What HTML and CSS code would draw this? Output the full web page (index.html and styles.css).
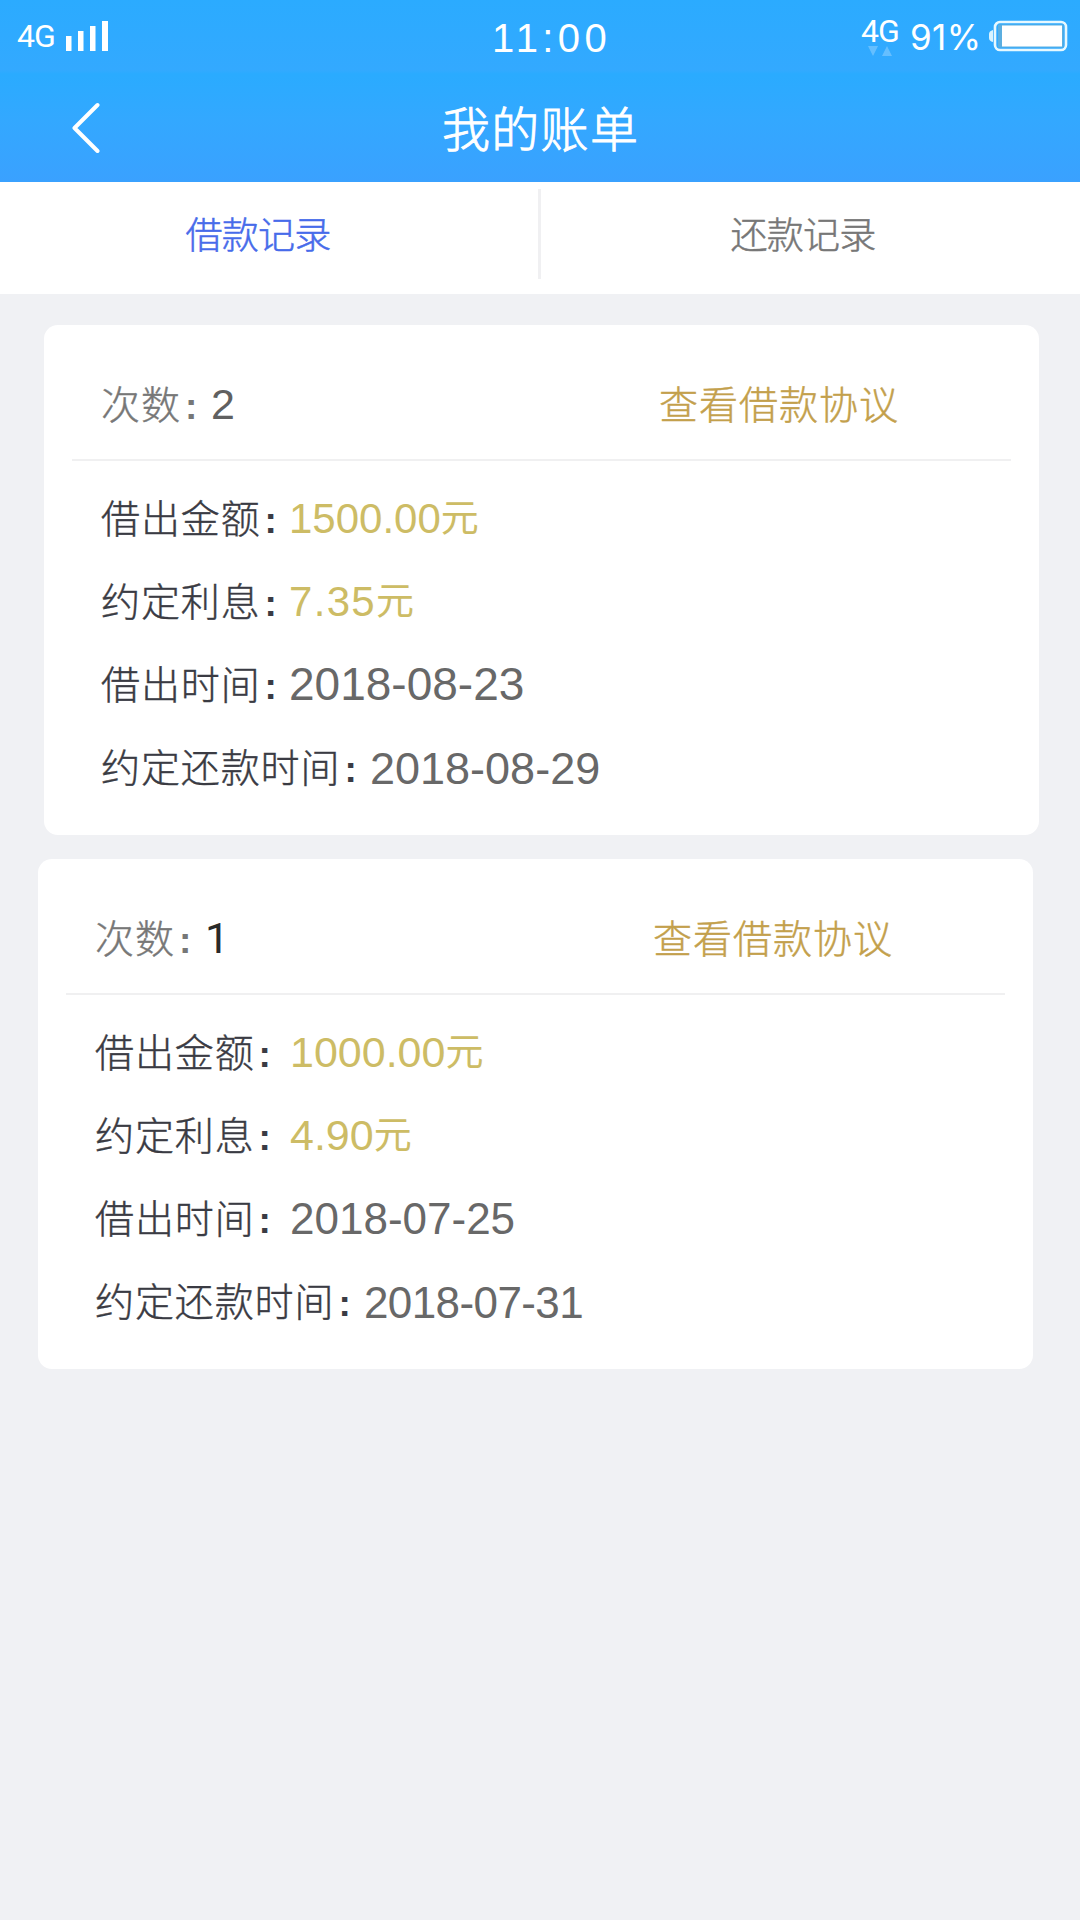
FILE: index.html
```html
<!DOCTYPE html>
<html lang="zh-CN">
<head>
    <meta charset="UTF-8">
    <meta name="viewport" content="width=device-width, initial-scale=1.0">
    <title>我的账单</title>
    <link rel="stylesheet" href="styles.css">
</head>
<body>
<header class="header">
    <div class="status-bar">
        <div class="status-left">
            <span class="network">4G</span>
            <svg class="signal" width="42" height="30" viewBox="0 0 42 30" fill="#fff">
                <rect x="0" y="15" width="5.5" height="15"/>
                <rect x="12" y="10" width="5.5" height="20"/>
                <rect x="24" y="5" width="5.5" height="25"/>
                <rect x="36" y="0" width="6" height="30"/>
            </svg>
        </div>
        <span class="time">11:00</span>
        <div class="status-right">
            <div class="data">
                <span class="network">4G</span>
                <svg class="arrows" width="24" height="10" viewBox="0 0 24 10" fill="#fff">
                    <path d="M0 0h10L5 10zM14 10h10L19 0z"/>
                </svg>
            </div>
            <span class="percent">91%</span>
            <svg class="battery" width="79" height="32" viewBox="0 0 79 32">
                <path d="M4 10v12q-4-1-4-4v-4q0-3 4-4z" fill="#d8f3ff"/>
                <rect x="6" y="2" width="71" height="28" rx="5" fill="none" stroke="#e6f8ff" stroke-width="2.6"/>
                <rect x="9" y="4.5" width="65.5" height="23" fill="#5baee0"/>
                <rect x="13" y="5.5" width="60" height="21" fill="#fff"/>
            </svg>
        </div>
    </div>
    <div class="nav-bar">
        <a href="#" class="back">
            <svg width="28" height="52" viewBox="0 0 28 52" fill="none" stroke="#fff" stroke-width="4" stroke-linecap="round" stroke-linejoin="round">
                <path d="M25.5 3L2.5 26L25.5 49"/>
            </svg>
        </a>
        <h1 class="title">我的账单</h1>
    </div>
</header>

<nav class="tabs">
    <a href="#" class="tab active">借款记录</a>
    <span class="tab-line"></span>
    <a href="#" class="tab">还款记录</a>
</nav>

<main class="list">
    <section class="card">
        <div class="card-head">
            <span class="count-label">次数<b class="colon">:</b></span>
            <span class="count">2</span>
            <a href="#" class="agreement">查看借款协议</a>
        </div>
        <div class="row">
            <span class="label">借出金额<b class="colon">:</b></span>
            <span class="money">1500.00<span class="yuan">元</span></span>
        </div>
        <div class="row">
            <span class="label">约定利息<b class="colon">:</b></span>
            <span class="money rate">7.35<span class="yuan">元</span></span>
        </div>
        <div class="row">
            <span class="label">借出时间<b class="colon">:</b></span>
            <span class="date">2018-08-23</span>
        </div>
        <div class="row">
            <span class="label label-long">约定还款时间<b class="colon">:</b></span>
            <span class="date date-due">2018-08-29</span>
        </div>
    </section>

    <section class="card card-shift">
        <div class="card-head">
            <span class="count-label">次数<b class="colon">:</b></span>
            <span class="count count-dark">1</span>
            <a href="#" class="agreement">查看借款协议</a>
        </div>
        <div class="row">
            <span class="label">借出金额<b class="colon">:</b></span>
            <span class="money">1000.00<span class="yuan">元</span></span>
        </div>
        <div class="row">
            <span class="label">约定利息<b class="colon">:</b></span>
            <span class="money">4.90<span class="yuan">元</span></span>
        </div>
        <div class="row">
            <span class="label">借出时间<b class="colon">:</b></span>
            <span class="date">2018-07-25</span>
        </div>
        <div class="row">
            <span class="label label-long">约定还款时间<b class="colon">:</b></span>
            <span class="date date-due">2018-07-31</span>
        </div>
    </section>
</main>
</body>
</html>
```
FILE: styles.css
```css
* {
    box-sizing: border-box;
}

body {
    margin: 0;
    min-height: 1920px;
    background-color: #f0f1f4;
    font-family: "Liberation Sans", "Noto Sans CJK SC", sans-serif;
    font-weight: 300;
}

a {
    color: inherit;
    text-decoration: none;
}

/* header */
.header {
    height: 182px;
    color: #fff;
    background: linear-gradient(#2babff 0, #33a9ff 70px, #2aabff 74px, #33a8ff 120px, #3aa1ff 182px);
}

.status-bar {
    display: grid;
    grid-template-columns: 492px 1fr auto;
    height: 74px;
    padding-right: 12px;
}

.status-left {
    display: flex;
    padding: 21px 0 0 17px;
    gap: 9px;
}

.network {
    width: 40px;
    font-family: Roboto, sans-serif;
    font-size: 32px;
    font-weight: 400;
    line-height: 30px;
    letter-spacing: -1px;
}

.time {
    padding-top: 16px;
    font-size: 40px;
    line-height: 44px;
    letter-spacing: 4.4px;
}

.status-right {
    display: flex;
}

.data {
    display: flex;
    flex-direction: column;
    width: 49px;
    padding-top: 16px;
}

.arrows {
    margin-left: 7px;
    opacity: 0.25;
}

.percent {
    width: 79px;
    padding-top: 16px;
    font-family: Inter, sans-serif;
    font-size: 35px;
    font-weight: 400;
    line-height: 42px;
    letter-spacing: 0.4px;
}

.battery {
    margin-top: 20px;
}

.nav-bar {
    display: flex;
    align-items: center;
    height: 108px;
    padding-left: 72px;
}

.back {
    display: flex;
    width: 370px;
}

.title {
    margin: -5px 0 0;
    font-size: 48px;
    font-weight: 300;
    letter-spacing: 1.3px;
    -webkit-text-stroke: 0.9px;
}

/* tabs */
.tabs {
    display: grid;
    grid-template-columns: 538px 3px 1fr;
    height: 112px;
    background-color: #fff;
}

.tab {
    padding-right: 22px;
    color: #777;
    font-size: 37px;
    line-height: 110px;
    letter-spacing: -0.8px;
    text-align: center;
    -webkit-text-stroke: 0.5px;
}

.tab:last-child {
    padding-right: 15px;
}

.tab.active {
    color: #476bea;
}

.tab-line {
    height: 90px;
    margin-top: 7px;
    background-color: #f0f0f2;
}

/* cards */
.list {
    padding: 31px 0 0 44px;
}

.card {
    width: 995px;
    height: 510px;
    margin-bottom: 24px;
    padding: 0 28px;
    border-radius: 14px;
    background-color: #fff;
}

.card-shift {
    margin-left: -6px;
}

.card-head {
    display: flex;
    height: 136px;
    margin-bottom: 16px;
    padding-left: 29px;
    border-bottom: 2px solid #f0f0f1;
    line-height: 162px;
}

.count-label {
    width: 110px;
    color: #777;
    font-size: 39px;
    letter-spacing: 1px;
    -webkit-text-stroke: 0.4px;
}

.colon {
    margin-left: 4px;
    font-size: 37px;
    font-weight: 700;
    letter-spacing: 0;
    -webkit-text-stroke: 0;
}

.count {
    width: 448px;
    color: #606060;
    font-size: 43px;
    line-height: 158px;
}

.count-dark {
    color: #292929;
    font-family: Roboto, sans-serif;
    font-weight: 400;
}

.agreement {
    color: #c3a04c;
    font-size: 39px;
    letter-spacing: 1px;
    -webkit-text-stroke: 0.4px;
}

.row {
    display: flex;
    height: 83px;
    padding-left: 29px;
    line-height: 83px;
}

.label {
    width: 188px;
    color: #3a3b43;
    font-size: 39px;
    line-height: 86px;
    letter-spacing: 0.9px;
    white-space: nowrap;
    -webkit-text-stroke: 0.4px;
}

.card-shift .label {
    width: 195px;
}

.money {
    color: #cdbc65;
    font-size: 42px;
}

.rate {
    letter-spacing: 1.3px;
}

.yuan {
    font-size: 38px;
    font-weight: 400;
    line-height: 1;
    vertical-align: 2px;
}

.date {
    color: #686868;
    font-size: 46px;
}

.date-due {
    font-size: 45px;
    line-height: 86px;
}

.card-shift .money {
    font-size: 43px;
}

.card-shift .date {
    font-size: 44px;
}

.card-shift .date-due {
    letter-spacing: -0.6px;
}

.label-long,
.card-shift .label-long {
    width: 269px;
}
```
